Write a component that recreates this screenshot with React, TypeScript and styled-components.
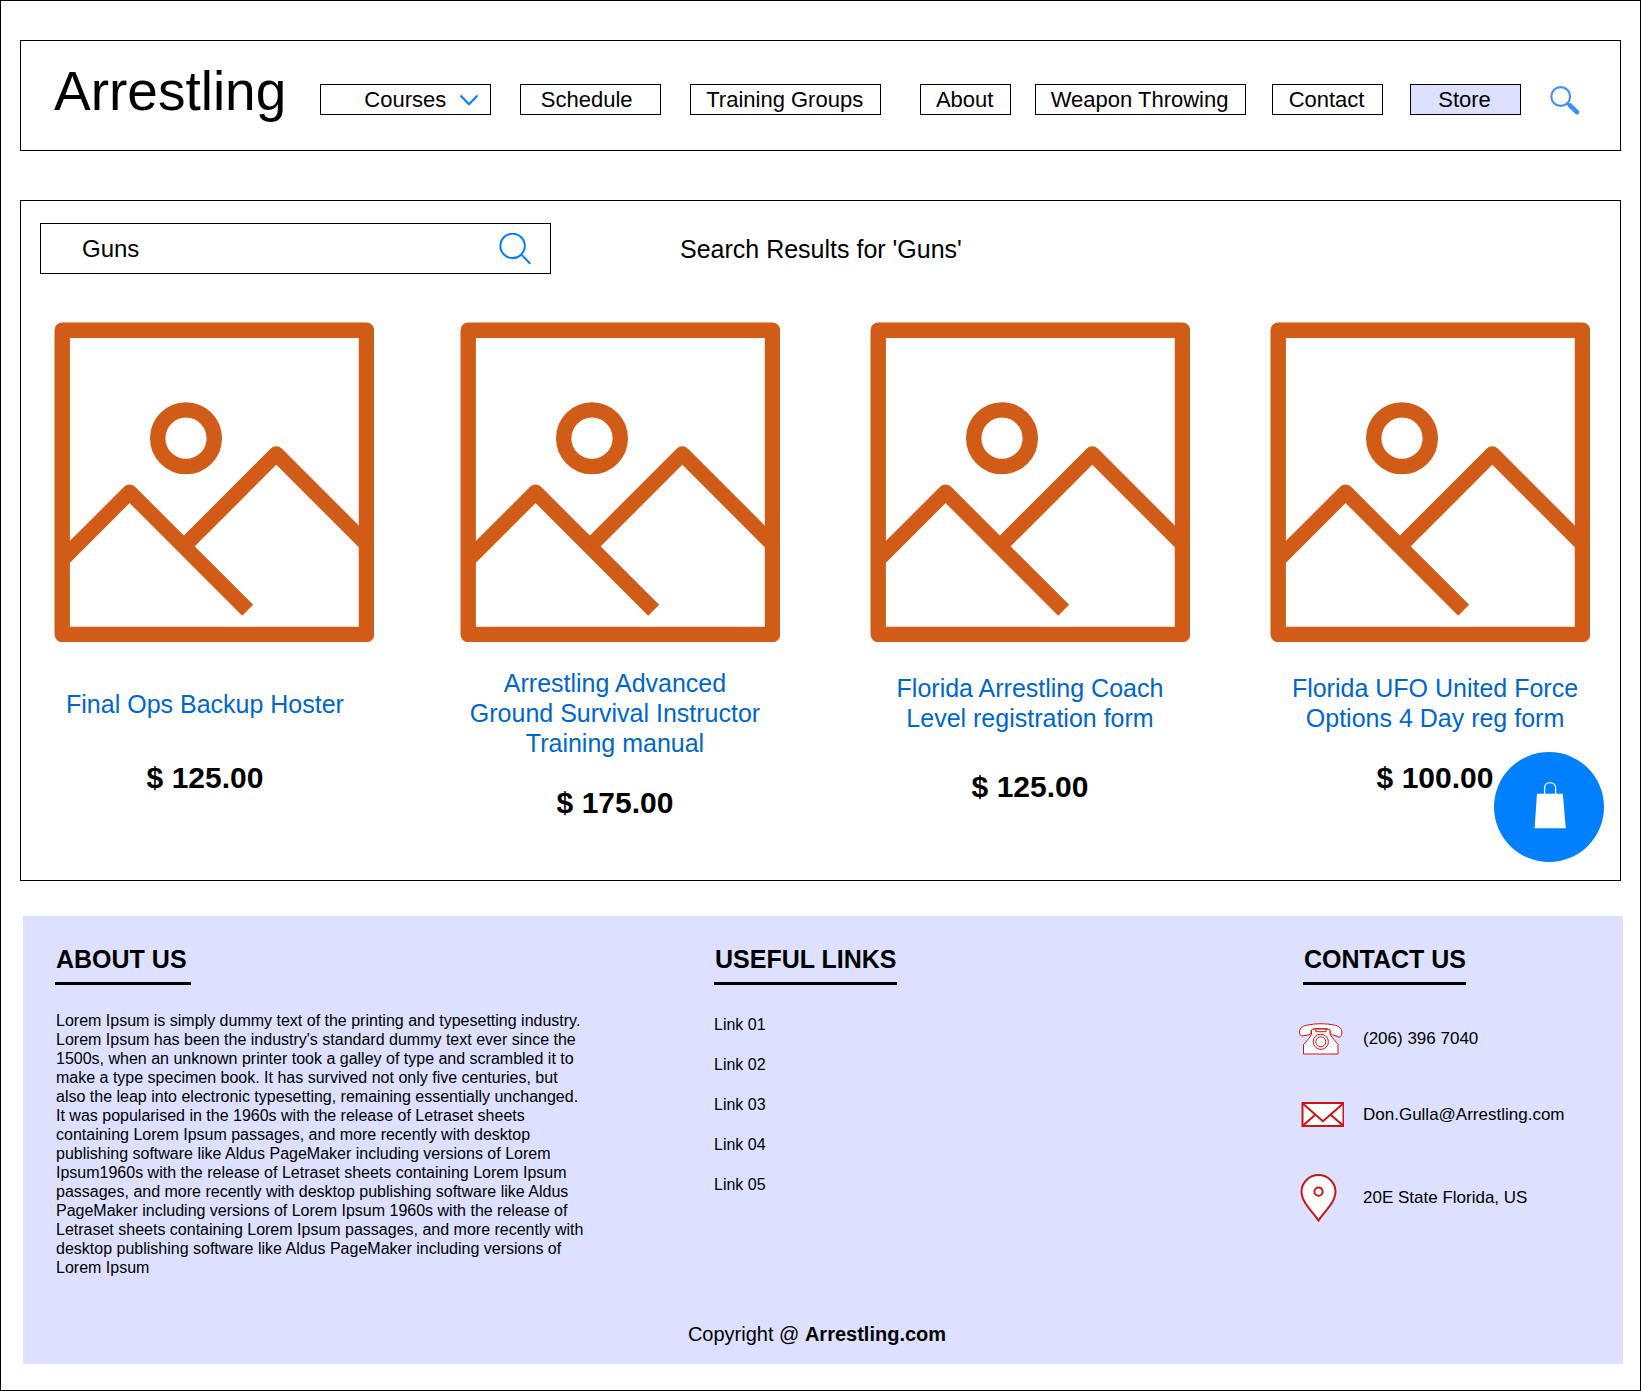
import React from "react";
import styled, { createGlobalStyle } from "styled-components";

const colors = {
  ink: "#000000",
  lavender: "#dde0ff",
  blue: "#007fff",
  skyBlue: "#3f8ff5",
  link: "#0066cc",
  orange: "#d05c17",
  red: "#cc1414",
};

const GlobalStyle = createGlobalStyle`
  *, *::before, *::after { box-sizing: border-box; }
  body { margin: 0; background: #ffffff; }
  body, button, input, select {
    font-family: "Liberation Sans", Arial, Helvetica, sans-serif;
    color: ${colors.ink};
  }
`;

const Page = styled.div`
  min-height: 100vh;
  padding-top: 39px;
  border: 1px solid ${colors.ink};
  background: #ffffff;
`;

/* ---------- header ---------- */

const Header = styled.header`
  display: flex;
  align-items: flex-end;
  margin: 0 19px;
  padding: 26px 40px 35px 33px;
  border: 1px solid ${colors.ink};
`;

const Logo = styled.a`
  flex: none;
  margin-right: 34px;
  font-size: 55px;
  line-height: 48px;
  color: inherit;
  text-decoration: none;
`;

const Nav = styled.nav`
  display: flex;
  flex: 1;
  min-width: 0;
`;

const NavSlot = styled.div<{ $width: number; $gap: number }>`
  display: grid;
  flex: ${(p) => p.$width} 1 0;
  margin-right: ${(p) => p.$gap}px;
  align-items: center;

  & > * {
    grid-area: 1 / 1;
  }
`;

const NavLink = styled.a<{ $active?: boolean; $padEnd?: number }>`
  display: block;
  padding-right: ${(p) => p.$padEnd ?? 2}px;
  border: 1px solid ${colors.ink};
  background: ${(p) => (p.$active ? colors.lavender : "transparent")};
  font-size: 22px;
  line-height: 29px;
  text-align: center;
  white-space: nowrap;
  color: inherit;
  text-decoration: none;
`;

const NavSelect = styled.select`
  appearance: none;
  width: 100%;
  height: 31px;
  padding: 0 0 0 43px;
  border: 1px solid ${colors.ink};
  border-radius: 0;
  background: transparent;
  font-size: 22px;
  line-height: 29px;
`;

const SelectArrow = styled.svg`
  justify-self: end;
  margin-right: 12px;
  pointer-events: none;
`;

const IconButton = styled.button`
  display: block;
  flex: none;
  padding: 0;
  border: 0;
  background: none;
  cursor: pointer;

  svg {
    display: block;
  }
`;

/* ---------- store ---------- */

const Store = styled.main`
  position: relative;
  margin: 49px 19px 0;
  padding: 22px 0 59px;
  border: 1px solid ${colors.ink};
`;

const SearchRow = styled.div`
  display: flex;
  align-items: center;
  gap: 129px;
  padding: 0 19px;
`;

const SearchForm = styled.form`
  display: flex;
  align-items: center;
  width: 511px;
  height: 51px;
  padding: 0 19px 0 41px;
  border: 1px solid ${colors.ink};
`;

const SearchInput = styled.input`
  flex: 1;
  min-width: 0;
  padding: 0;
  border: 0;
  outline: 0;
  background: none;
  font-size: 24px;
  line-height: 30px;
`;

const ResultsTitle = styled.h1`
  margin: 0;
  font-size: 25px;
  font-weight: 400;
  line-height: 30px;
`;

const Products = styled.ul`
  display: grid;
  grid-template-columns: 406fr 410fr 400fr 320fr;
  margin: 48px 30px 0 33px;
  padding: 0;
  list-style: none;
`;

const Product = styled.li`
  max-width: 320px;
`;

const Picture = styled.svg`
  display: block;
  width: 100%;
  height: auto;
`;

const Caption = styled.div<{ $top: number; $gap: number; $padLeft: number; $padRight: number }>`
  display: flex;
  flex-direction: column;
  align-items: center;
  gap: ${(p) => p.$gap}px;
  padding: ${(p) => `${p.$top}px ${p.$padRight}px 0 ${p.$padLeft}px`};
  text-align: center;
`;

const ProductLink = styled.a`
  max-width: 300px;
  font-size: 25px;
  line-height: 30px;
  color: ${colors.link};
  text-decoration: none;
`;

const Price = styled.span`
  font-size: 30px;
  font-weight: 700;
  line-height: 36px;
`;

const CartButton = styled.button`
  position: absolute;
  right: 16px;
  bottom: 18px;
  width: 110px;
  height: 110px;
  padding: 0;
  border: 0;
  border-radius: 50%;
  background: ${colors.blue};
  cursor: pointer;

  svg {
    display: block;
  }
`;

/* ---------- footer ---------- */

const Footer = styled.footer`
  margin: 35px 17px 26px 22px;
  padding: 28px 24px 18px 32px;
  background: ${colors.lavender};
`;

const FooterColumns = styled.div`
  display: grid;
  grid-template-columns: 659fr 585fr 300fr;
`;

const FooterHeading = styled.h2<{ $inset?: number }>`
  width: fit-content;
  min-width: 136px;
  margin: 0 0 0 ${(p) => p.$inset ?? 0}px;
  padding: 0 0 8px 1px;
  border-bottom: 3px solid ${colors.ink};
  font-size: 25px;
  font-weight: 700;
  line-height: 30px;
`;

const AboutText = styled.p`
  max-width: 531px;
  margin: 26px 0 0;
  padding-left: 1px;
  font-size: 16px;
  line-height: 19px;
`;

const LinkList = styled.ul`
  display: flex;
  flex-direction: column;
  gap: 20px;
  margin: 30px 0 0;
  padding: 0;
  list-style: none;
  font-size: 16px;
  line-height: 20px;
`;

const FooterLink = styled.a`
  color: inherit;
  text-decoration: none;
`;

const ContactList = styled.ul`
  display: flex;
  flex-direction: column;
  gap: 47px;
  margin: 38px 0 0;
  padding: 0;
  list-style: none;
  font-size: 17px;
  line-height: 20px;
`;

const ContactRow = styled.li`
  display: grid;
  grid-template-columns: 46px 1fr;
  column-gap: 18px;
  align-items: center;

  svg {
    display: block;
  }
`;

const Copyright = styled.p`
  margin: 45px 0 0;
  padding-right: 20px;
  font-size: 20px;
  line-height: 24px;
  text-align: center;
`;

/* ---------- icons ---------- */

const ChevronIcon = () => (
  <SelectArrow width="20" height="12" viewBox="0 0 20 12" fill="none" aria-hidden="true">
    <path d="M1.5 1.5 10 10.2 18.5 1.5" stroke={colors.blue} strokeWidth="2" />
  </SelectArrow>
);

const BoldSearchIcon = () => (
  <svg width="30" height="29" viewBox="0 0 30 29" fill="none" stroke={colors.skyBlue} aria-hidden="true">
    <circle cx="10.7" cy="10.5" r="9.4" strokeWidth="2.1" />
    <path d="M17 17l3 3" strokeWidth="2.6" />
    <path d="M20.2 19.6l6.7 6.5" strokeWidth="4.8" strokeLinecap="round" />
  </svg>
);

const ThinSearchIcon = () => (
  <svg width="32" height="32" viewBox="0 0 32 32" fill="none" stroke={colors.blue} strokeWidth="2" aria-hidden="true">
    <circle cx="13.6" cy="12.9" r="12.2" />
    <path d="M22.3 21.6 31.3 30.8" />
  </svg>
);

const PlaceholderPicture = () => (
  <Picture viewBox="0 0 320 320" fill="none" stroke={colors.orange} strokeWidth="15.4" strokeLinejoin="round" aria-hidden="true">
    <rect x="8.200" y="8.300" width="304.300" height="304.200" />
    <circle cx="132" cy="116.2" r="28.3" />
    <path d="M8 237.8 75.6 170.2 193.7 288.3" />
    <path d="M129.8 224.4 222.3 131.9 312.8 222.4" />
  </Picture>
);

const BagIcon = () => (
  <svg width="110" height="110" viewBox="0 0 110 110" aria-hidden="true">
    <path d="M43 41.8H68.8L71.8 76.3H40.6Z" fill="#ffffff" />
    <path d="M50.6 43V36C50.6 28.8 61.6 28.8 61.6 36V43" fill="none" stroke="#ffffff" strokeWidth="1.3" />
  </svg>
);

const PhoneIcon = () => (
  <svg width="44" height="32" viewBox="0 0 44 32" fill="#ffffff" stroke={colors.red} strokeWidth="1" strokeLinejoin="round" aria-hidden="true">
    <path d="M4.5 31V21.5C7 18.5 11 15 12.5 11V6H31V11C33 15 37 18.5 39 21.5V31Z" />
    <path d="M16.8 5.5V8.7H27V5.5" fill="none" />
    <path d="M.6 9C.6 4.5 4.5 2.6 9 2 17 .3 27 .3 35 2 39.5 2.8 42.7 5 42.9 9 43 12 42 14.2 40 14.2L33.5 11.8C31.6 11 31.8 10 31.5 8.3 31.2 6.5 29 5.6 26 5.6H17C14 5.6 12.2 6.5 12 8.3 11.8 10.3 11.8 11.4 10 11.8L2.8 13C1.2 13 .6 11 .6 9Z" />
    <circle cx="21.8" cy="18.8" r="7.6" />
    <circle cx="21.8" cy="18.8" r="5" />
  </svg>
);

const MailIcon = () => (
  <svg width="45" height="25" viewBox="0 0 45 25" fill="none" stroke={colors.red} strokeWidth="2" aria-hidden="true">
    <rect x="3.5" y="1" width="41" height="23" fill="#ffffff" />
    <path d="M3.5 1.3 23.9 19.2 44.5 1.3M3.5 24 16.3 12.8M44.5 24 31.7 12.8" />
  </svg>
);

const PinIcon = () => (
  <svg width="38" height="48" viewBox="0 0 38 48" fill="#ffffff" stroke={colors.red} strokeWidth="2" aria-hidden="true">
    <path d="M19.5 46.5C14.500 38.5 2.500 28.500 2.500 17.800A17 16.700 0 0 1 36.500 17.800C36.500 28.500 24.500 38.500 19.500 46.500Z" />
    <circle cx="19.5" cy="17.7" r="4.100" />
  </svg>
);

/* ---------- data ---------- */

const navLinks = [
  { label: "Schedule", width: 141, gap: 29, padEnd: 8 },
  { label: "Training Groups", width: 191, gap: 39 },
  { label: "About", width: 91, gap: 24 },
  { label: "Weapon Throwing", width: 211, gap: 26 },
  { label: "Contact", width: 111, gap: 27 },
  { label: "Store", width: 111, gap: 29, active: true },
];

const products = [
  { title: "Final Ops Backup Hoster", price: "$ 125.00", top: 47, gap: 41, padLeft: 0, padRight: 18 },
  {
    title: "Arrestling Advanced Ground Survival Instructor Training manual",
    price: "$ 175.00",
    top: 26,
    gap: 27,
    padLeft: 0,
    padRight: 10,
  },
  { title: "Florida Arrestling Coach Level registration form", price: "$ 125.00", top: 31, gap: 36, padLeft: 0, padRight: 0 },
  { title: "Florida UFO United Force Options 4 Day reg form", price: "$ 100.00", top: 31, gap: 27, padLeft: 10, padRight: 0 },
];

const usefulLinks = ["Link 01", "Link 02", "Link 03", "Link 04", "Link 05"];

export default function App() {
  return (
    <Page>
      <GlobalStyle />
      <Header>
        <Logo href="#home">Arrestling</Logo>
        <Nav aria-label="Main">
          <NavSlot $width={171} $gap={29}>
            <NavSelect aria-label="Courses" defaultValue="courses">
              <option value="courses">Courses</option>
            </NavSelect>
            <ChevronIcon />
          </NavSlot>
          {navLinks.map((item) => (
            <NavSlot key={item.label} $width={item.width} $gap={item.gap}>
              <NavLink
                href={"#" + item.label.toLowerCase().replace(" ", "-")}
                $active={item.active}
                $padEnd={item.padEnd}
                aria-current={item.active ? "page" : undefined}
              >
                {item.label}
              </NavLink>
            </NavSlot>
          ))}
        </Nav>
        <IconButton type="button" aria-label="Search the site">
          <BoldSearchIcon />
        </IconButton>
      </Header>

      <Store>
        <SearchRow>
          <SearchForm role="search" onSubmit={(e) => e.preventDefault()}>
            <SearchInput type="text" aria-label="Search the store" defaultValue="Guns" />
            <IconButton type="submit" aria-label="Search">
              <ThinSearchIcon />
            </IconButton>
          </SearchForm>
          <ResultsTitle>Search Results for 'Guns'</ResultsTitle>
        </SearchRow>

        <Products>
          {products.map((item) => (
            <Product key={item.title}>
              <PlaceholderPicture />
              <Caption $top={item.top} $gap={item.gap} $padLeft={item.padLeft} $padRight={item.padRight}>
                <ProductLink href="#product">{item.title}</ProductLink>
                <Price>{item.price}</Price>
              </Caption>
            </Product>
          ))}
        </Products>

        <CartButton type="button" aria-label="Open shopping bag">
          <BagIcon />
        </CartButton>
      </Store>

      <Footer>
        <FooterColumns>
          <section>
            <FooterHeading>ABOUT US</FooterHeading>
            <AboutText>
              Lorem Ipsum is simply dummy text of the printing and typesetting industry. Lorem Ipsum has been the
              industry's standard dummy text ever since the 1500s, when an unknown printer took a galley of type and
              scrambled it to make a type specimen book. It has survived not only five centuries, but also the leap
              into electronic typesetting, remaining essentially unchanged. It was popularised in the 1960s with the
              release of Letraset sheets containing Lorem Ipsum passages, and more recently with desktop publishing
              software like Aldus PageMaker including versions of Lorem Ipsum1960s with the release of Letraset sheets
              containing Lorem Ipsum passages, and more recently with desktop publishing software like Aldus PageMaker
              including versions of Lorem Ipsum 1960s with the release of Letraset sheets containing Lorem Ipsum
              passages, and more recently with desktop publishing software like Aldus PageMaker including versions of
              Lorem Ipsum
            </AboutText>
          </section>
          <section>
            <FooterHeading>USEFUL LINKS</FooterHeading>
            <LinkList>
              {usefulLinks.map((label) => (
                <li key={label}>
                  <FooterLink href="#link">{label}</FooterLink>
                </li>
              ))}
            </LinkList>
          </section>
          <section>
            <FooterHeading $inset={4}>CONTACT US</FooterHeading>
            <ContactList>
              <ContactRow>
                <PhoneIcon />
                <FooterLink href="tel:2063967040">(206) 396 7040</FooterLink>
              </ContactRow>
              <ContactRow>
                <MailIcon />
                <FooterLink href="mailto:Don.Gulla@Arrestling.com">Don.Gulla@Arrestling.com</FooterLink>
              </ContactRow>
              <ContactRow>
                <PinIcon />
                <span>20E State Florida, US</span>
              </ContactRow>
            </ContactList>
          </section>
        </FooterColumns>
        <Copyright>
          Copyright @ <strong>Arrestling.com</strong>
        </Copyright>
      </Footer>
    </Page>
  );
}
